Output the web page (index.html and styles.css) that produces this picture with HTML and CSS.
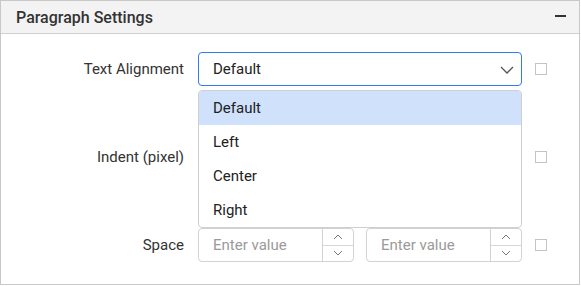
FILE: index.html
```html
<!DOCTYPE html>
<html>
<head>
<meta charset="utf-8">
<link rel="stylesheet" href="styles.css">
</head>
<body>
<div class="panel">
  <div class="panel-header">
    <span class="panel-title">Paragraph Settings</span>
    <span class="collapse-icon"></span>
  </div>
  <div class="panel-body">
    <div class="row">
      <label class="row-label">Text Alignment</label>
      <div class="control">
        <div class="select">
          <span class="select-value">Default</span>
          <svg class="select-arrow" width="14" height="8" viewBox="0 0 14 8"><path d="M1 1 L7 7 L13 1" fill="none" stroke="#555" stroke-width="1.3"/></svg>
        </div>
        <ul class="popup">
          <li class="popup-item active">Default</li>
          <li class="popup-item">Left</li>
          <li class="popup-item">Center</li>
          <li class="popup-item">Right</li>
        </ul>
      </div>
      <span class="checkbox"></span>
    </div>
    <div class="row">
      <label class="row-label">Indent (pixel)</label>
      <div class="control pair">
        <div class="numeric"><span class="placeholder"></span><div class="spin"><span class="spin-up"></span><span class="spin-down"></span></div></div>
        <div class="numeric"><span class="placeholder"></span><div class="spin"><span class="spin-up"></span><span class="spin-down"></span></div></div>
      </div>
      <span class="checkbox"></span>
    </div>
    <div class="row">
      <label class="row-label">Space</label>
      <div class="control pair">
        <div class="numeric"><span class="placeholder">Enter value</span><div class="spin">
          <span class="spin-up"><svg width="10" height="6" viewBox="0 0 10 6"><path d="M1 5 L5 1 L9 5" fill="none" stroke="#777" stroke-width="1"/></svg></span>
          <span class="spin-down"><svg width="10" height="6" viewBox="0 0 10 6"><path d="M1 1 L5 5 L9 1" fill="none" stroke="#777" stroke-width="1"/></svg></span>
        </div></div>
        <div class="numeric"><span class="placeholder">Enter value</span><div class="spin">
          <span class="spin-up"><svg width="10" height="6" viewBox="0 0 10 6"><path d="M1 5 L5 1 L9 5" fill="none" stroke="#777" stroke-width="1"/></svg></span>
          <span class="spin-down"><svg width="10" height="6" viewBox="0 0 10 6"><path d="M1 1 L5 5 L9 1" fill="none" stroke="#777" stroke-width="1"/></svg></span>
        </div></div>
      </div>
      <span class="checkbox"></span>
    </div>
  </div>
</div>
</body>
</html>
```
FILE: styles.css
```css
* { box-sizing: border-box; }
body {
  margin: 0;
  font-family: Roboto, "Liberation Sans", sans-serif;
  font-size: 15px;
  color: #333;
  background: #fff;
}
.panel {
  width: 580px;
  height: 285px;
  border: 1px solid #c8c8c8;
  background: #fff;
}
.panel-header {
  height: 33px;
  background: #f3f3f3;
  border-bottom: 1px solid #d0d0d0;
  display: flex;
  align-items: center;
  justify-content: space-between;
  padding: 0 13px 0 15px;
}
.panel-title {
  font-weight: 500;
  font-size: 16px;
  color: #333;
}
.collapse-icon {
  width: 11px;
  height: 2px;
  background: #333;
  margin-bottom: 3px;
}
.panel-body {
  padding-top: 18px;
  display: flex;
  flex-direction: column;
  gap: 54px;
}
.row {
  display: grid;
  grid-template-columns: 183px 324px 12px;
  column-gap: 14px;
  align-items: center;
  height: 34px;
}
.row .checkbox { margin-left: -1px; }
.row-label {
  text-align: right;
  color: #333;
}
.control {
  position: relative;
  height: 34px;
}
.select {
  height: 34px;
  border: 1px solid #2f7bf0;
  border-radius: 4px;
  display: flex;
  align-items: center;
  justify-content: space-between;
  padding: 0 7px 0 14px;
}
.select-value { color: #222; }
.select-arrow { margin-top: 1px; }
.popup {
  position: absolute;
  left: 0;
  top: 38px;
  width: 324px;
  margin: 0;
  padding: 0;
  list-style: none;
  background: #fff;
  border: 1px solid #cfcfcf;
  border-radius: 4px;
  z-index: 10;
  overflow: hidden;
}
.popup-item {
  height: 34px;
  line-height: 34px;
  padding-left: 14px;
  color: #222;
}
.popup-item.active { background: #cfe1fb; }
.pair {
  display: flex;
  gap: 12px;
}
.numeric {
  flex: 1;
  height: 34px;
  border: 1px solid #d2d2d2;
  border-radius: 4px;
  display: flex;
  align-items: stretch;
}
.placeholder {
  flex: 1;
  padding-left: 14px;
  display: flex;
  align-items: center;
  color: #9a9a9a;
}
.spin {
  width: 31px;
  border-left: 1px solid #d2d2d2;
  display: flex;
  flex-direction: column;
}
.spin-up, .spin-down {
  flex: 1;
  display: flex;
  align-items: center;
  justify-content: center;
}
.spin-up { border-bottom: 1px solid #d8d8d8; }
.checkbox {
  width: 12px;
  height: 12px;
  border: 1px solid #c4c4c4;
  background: #fff;
}
```
